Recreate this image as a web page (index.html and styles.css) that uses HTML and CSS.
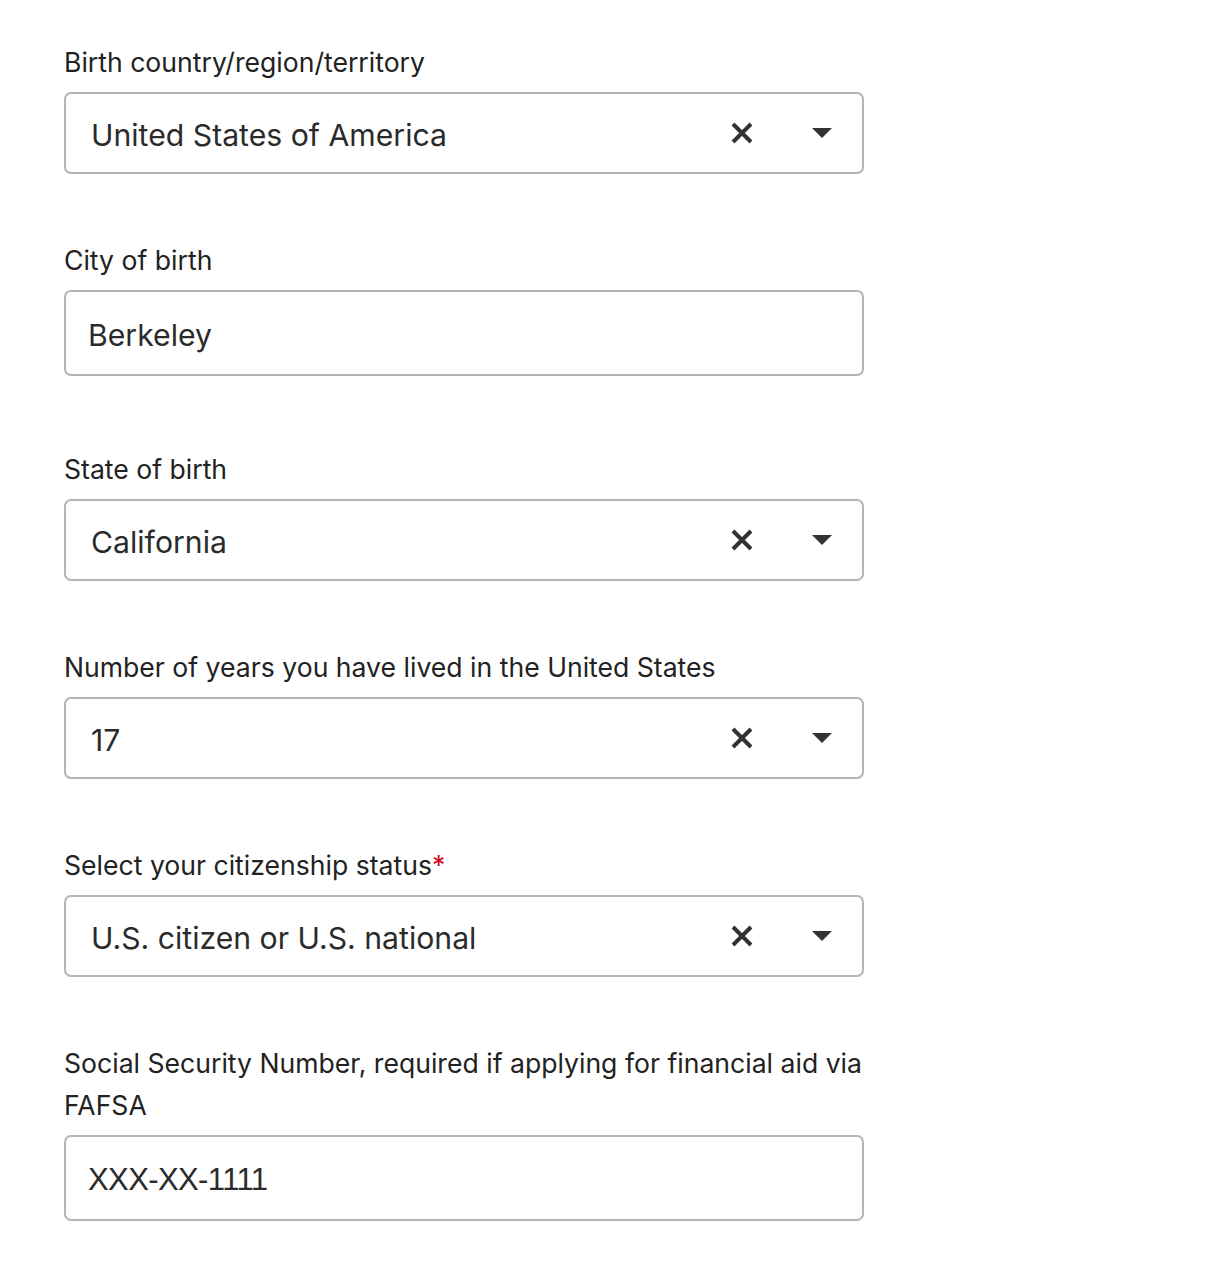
FILE: index.html
```html
<!DOCTYPE html>
<html lang="en">
<head>
<meta charset="utf-8">
<title>Birth details</title>
<link rel="stylesheet" href="styles.css">
</head>
<body>
<form class="form">
  <div class="field">
    <label class="label">Birth country/region/territory</label>
    <div class="select">
      <span class="value">United States of America</span>
      <span class="clear"><svg width="24" height="24" viewBox="0 0 24 24"><path d="M3 3 L21 21 M21 3 L3 21" stroke="#333" stroke-width="4"/></svg></span>
      <span class="caret"><svg width="20" height="10" viewBox="0 0 20 10"><path d="M0 0 H20 L10 10 Z" fill="#333"/></svg></span>
    </div>
  </div>
  <div class="field text-field">
    <label class="label">City of birth</label>
    <div class="input"><span class="value">Berkeley</span></div>
  </div>
  <div class="field">
    <label class="label">State of birth</label>
    <div class="select">
      <span class="value">California</span>
      <span class="clear"><svg width="24" height="24" viewBox="0 0 24 24"><path d="M3 3 L21 21 M21 3 L3 21" stroke="#333" stroke-width="4"/></svg></span>
      <span class="caret"><svg width="20" height="10" viewBox="0 0 20 10"><path d="M0 0 H20 L10 10 Z" fill="#333"/></svg></span>
    </div>
  </div>
  <div class="field">
    <label class="label">Number of years you have lived in the United States</label>
    <div class="select">
      <span class="value">17</span>
      <span class="clear"><svg width="24" height="24" viewBox="0 0 24 24"><path d="M3 3 L21 21 M21 3 L3 21" stroke="#333" stroke-width="4"/></svg></span>
      <span class="caret"><svg width="20" height="10" viewBox="0 0 20 10"><path d="M0 0 H20 L10 10 Z" fill="#333"/></svg></span>
    </div>
  </div>
  <div class="field">
    <label class="label">Select your citizenship status<span class="req">*</span></label>
    <div class="select">
      <span class="value">U.S. citizen or U.S. national</span>
      <span class="clear"><svg width="24" height="24" viewBox="0 0 24 24"><path d="M3 3 L21 21 M21 3 L3 21" stroke="#333" stroke-width="4"/></svg></span>
      <span class="caret"><svg width="20" height="10" viewBox="0 0 20 10"><path d="M0 0 H20 L10 10 Z" fill="#333"/></svg></span>
    </div>
  </div>
  <div class="field text-field">
    <label class="label">Social Security Number, required if applying for financial aid via FAFSA</label>
    <div class="input"><span class="value ssn">XXX-XX-1111</span></div>
  </div>
</form>
</body>
</html>
```

FILE: styles.css
```css
html, body {
  margin: 0;
  padding: 0;
  background: #ffffff;
}
body {
  font-family: Inter, "Open Sans", sans-serif;
  color: #222222;
}
.form {
  width: 800px;
  padding: 41px 0 0 64px;
  display: flex;
  flex-direction: column;
}
.field {
  display: flex;
  flex-direction: column;
  margin-bottom: 65px;
}
.text-field {
  margin-bottom: 72px;
}
.label {
  font-size: 26.6px;
  line-height: 42px;
  margin-bottom: 9px;
  color: #222222;
}
.req {
  color: #d0021b;
}
.select, .input {
  box-sizing: border-box;
  width: 800px;
  border: 2px solid #b5b5b5;
  border-radius: 7px;
  display: flex;
  align-items: center;
  padding-left: 25px;
  background: #fff;
}
.select {
  height: 82px;
}
.input {
  height: 86px;
  padding-left: 22px;
}
.value {
  flex: 1;
  font-size: 30.2px;
  color: #2b2b2b;
  padding-top: 4px;
}
.ssn {
  font-family: "Liberation Sans", Arial, sans-serif;
  font-size: 31px;
  letter-spacing: -0.6px;
  color: #2b2b2b;
}
.clear {
  display: flex;
  width: 24px;
  height: 24px;
  margin-right: 58px;
}
.caret {
  display: flex;
  width: 20px;
  height: 10px;
  margin-right: 30px;
}
```
